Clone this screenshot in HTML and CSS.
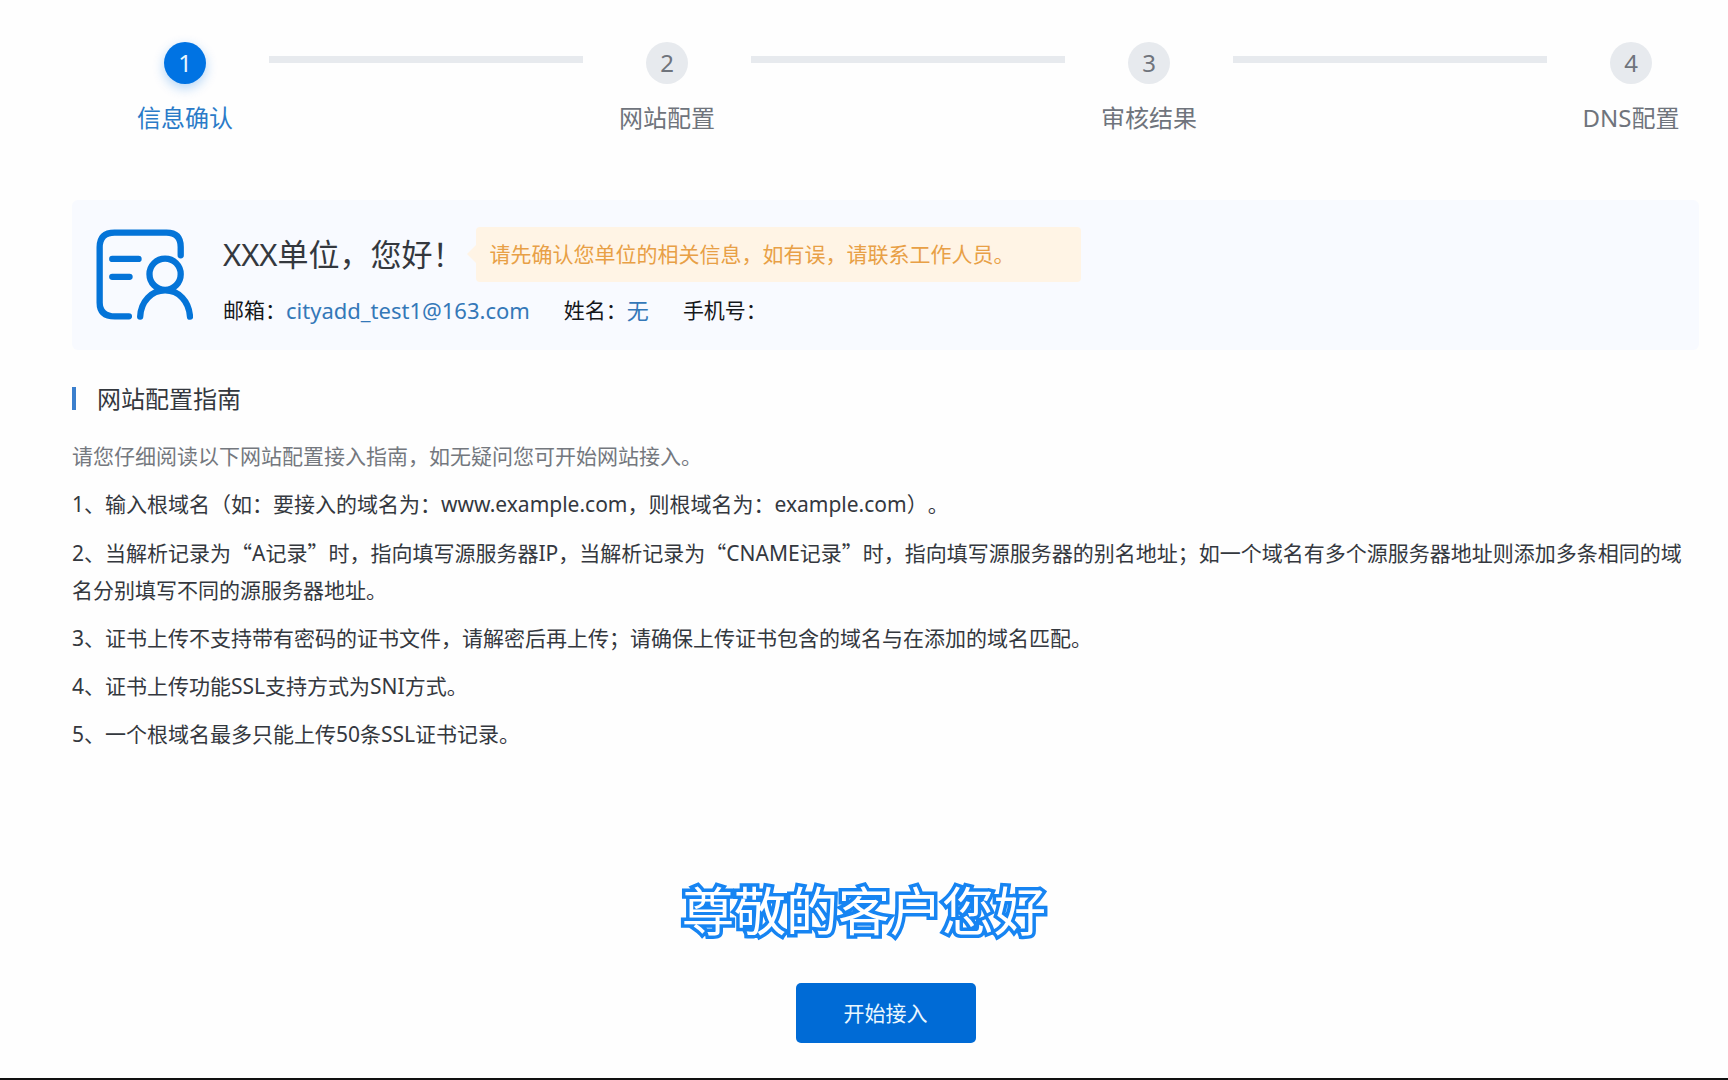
FILE: index.html
```html
<!DOCTYPE html>
<html lang="zh-CN">
<head>
<meta charset="utf-8">
<meta name="viewport" content="width=device-width, initial-scale=1">
<title>网站接入</title>
<link rel="stylesheet" href="styles.css">
</head>
<body>
<ol class="steps">
  <li class="step step-active"><span class="step-number">1</span><span class="step-label">信息确认</span></li>
  <li class="step-line" aria-hidden="true"></li>
  <li class="step"><span class="step-number">2</span><span class="step-label">网站配置</span></li>
  <li class="step-line" aria-hidden="true"></li>
  <li class="step"><span class="step-number">3</span><span class="step-label">审核结果</span></li>
  <li class="step-line" aria-hidden="true"></li>
  <li class="step"><span class="step-number">4</span><span class="step-label">DNS配置</span></li>
</ol>
<main class="content">
  <section class="profile">
    <svg class="profile-icon" viewBox="108 118 292 272" aria-hidden="true">
      <path d="M363 196V171Q363 128 320 128H164Q119 128 119 172V338Q119 380 165 380H207"/>
      <path d="M157 207H236M157 261H209"/>
      <circle cx="316" cy="253" r="47"/>
      <path d="M241 381C243 335 275 302 316 302C358 302 388 335 391 381"/>
    </svg>
    <div class="profile-body">
      <div class="profile-top">
        <h1 class="greeting">XXX单位，您好！</h1>
        <p class="tip">请先确认您单位的相关信息，如有误，请联系工作人员。</p>
      </div>
      <dl class="facts">
        <div class="fact"><dt>邮箱：</dt><dd>cityadd_test1@163.com</dd></div>
        <div class="fact"><dt>姓名：</dt><dd>无</dd></div>
        <div class="fact"><dt>手机号：</dt><dd></dd></div>
      </dl>
    </div>
  </section>
  <section class="guide">
    <h2 class="guide-title">网站配置指南</h2>
    <p class="guide-intro">请您仔细阅读以下网站配置接入指南，如无疑问您可开始网站接入。</p>
    <p>1、输入根域名（如：要接入的域名为：www.example.com，则根域名为：example.com）。</p>
    <p>2、当解析记录为<span class="quote">“</span>A记录<span class="quote">”</span>时，指向填写源服务器IP，当解析记录为<span class="quote">“</span>CNAME记录<span class="quote">”</span>时，指向填写源服务器的别名地址；如一个域名有多个源服务器地址则添加多条相同的域名分别填写不同的源服务器地址。</p>
    <p>3、证书上传不支持带有密码的证书文件，请解密后再上传；请确保上传证书包含的域名与在添加的域名匹配。</p>
    <p>4、证书上传功能SSL支持方式为SNI方式。</p>
    <p>5、一个根域名最多只能上传50条SSL证书记录。</p>
  </section>
</main>
<p class="caption">尊敬的客户您好</p>
<div class="actions"><button class="start" type="button">开始接入</button></div>
</body>
</html>
```
FILE: styles.css
```css
* {
  box-sizing: border-box;
}

body,
h1,
h2,
p,
ol,
dl,
dd {
  margin: 0;
  padding: 0;
}

body {
  display: flex;
  flex-direction: column;
  min-height: 100vh;
  border-bottom: 2px solid #111;
  background: #fefefe;
  color: #34383e;
  font: 21px/37px "Noto Sans", "Noto Sans CJK SC", sans-serif;
  text-spacing-trim: space-all;
}

.steps {
  display: flex;
  padding: 42px 13px 0 101px;
  list-style: none;
}

.step {
  display: flex;
  flex-direction: column;
  align-items: center;
  gap: 15px;
  width: 168px;
  color: #6f747c;
  font-size: 24px;
}

.step-number {
  width: 42px;
  height: 42px;
  border-radius: 50%;
  background: #e7eaee;
  line-height: 42px;
  text-align: center;
}

.step-active {
  color: #2a7bc8;
}

.step-active .step-number {
  background: #0073e3;
  box-shadow: 0 4px 12px rgba(0, 115, 227, 0.3);
  color: #e6f6ff;
}

.step-line {
  flex: 1;
  height: 7px;
  margin-top: 14px;
  background: #e7eaee;
}

.content {
  padding: 64px 29px 0 72px;
}

.profile {
  display: flex;
  gap: 30px;
  padding: 27px 24px 21px;
  border-radius: 6px;
  background: #f8faff;
}

.profile-icon {
  flex: none;
  width: 97px;
  height: 91px;
  margin-top: 2px;
  fill: none;
  stroke: #0474d8;
  stroke-width: 19;
  stroke-linecap: round;
}

.profile-top {
  display: flex;
  align-items: center;
  gap: 12px;
}

.greeting {
  font-size: 31px;
  font-weight: 400;
}

.tip {
  position: relative;
  padding: 9px 66px 9px 14px;
  border-radius: 4px;
  background: #fff4e5;
  color: #e8a046;
}

.tip::before {
  content: "";
  position: absolute;
  top: 18px;
  left: -9px;
  border: solid transparent;
  border-width: 9px 9px 9px 0;
  border-right-color: #fff4e5;
}

.facts {
  display: flex;
  gap: 34px;
  margin-top: 10px;
}

.fact {
  display: flex;
  color: #15171a;
}

.fact dd {
  color: #3478b8;
  font-size: 22px;
}

.guide {
  display: flex;
  flex-direction: column;
  gap: 11px;
  padding-top: 30px;
}

.guide-title {
  display: flex;
  align-items: center;
  gap: 21px;
  padding-bottom: 10px;
  font-size: 24px;
  font-weight: 400;
}

.guide-title::before {
  content: "";
  width: 4px;
  height: 23px;
  background: #3b7fcd;
}

.guide-intro {
  color: #74787e;
}

.quote {
  font-family: "Noto Sans CJK SC", sans-serif;
}

.caption {
  margin-top: 120px;
  color: #fff;
  font-size: 52px;
  font-weight: 400;
  line-height: 76px;
  text-align: center;
  -webkit-text-stroke: 7px #1684f2;
  paint-order: stroke fill;
}

.actions {
  display: flex;
  justify-content: center;
  padding: 34px 29px 35px 72px;
}

.start {
  width: 180px;
  height: 60px;
  border: 0;
  border-radius: 5px;
  background: #006bd6;
  color: #e9f7ff;
  font: inherit;
}
```
